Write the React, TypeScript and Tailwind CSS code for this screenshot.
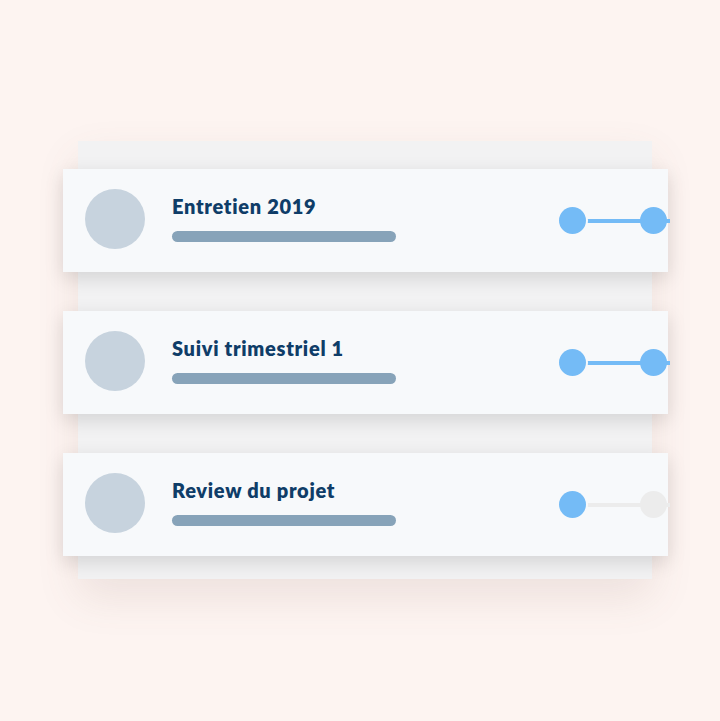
const items = [
  { title: "Entretien 2019", done: true },
  { title: "Suivi trimestriel 1", done: true },
  { title: "Review du projet", done: false },
];

const Steps = ({ done }: { done: boolean }) => (
  <div className="relative flex items-center w-[111px] h-[30px] -mr-[2px] shrink-0">
    <div
      className={`absolute left-[13px] right-0 top-1/2 -translate-y-1/2 h-[4px] ${
        done ? "bg-[#74bbf6]" : "bg-[#ececec]"
      }`}
    />
    <div className="relative w-[27px] h-[27px] rounded-full bg-[#74bbf6] ring-2 ring-[#f7f9fb]" />
    <div
      className={`relative ml-auto mr-[3px] w-[27px] h-[27px] rounded-full ${
        done ? "bg-[#74bbf6]" : "bg-[#ececec]"
      }`}
    />
  </div>
);

const App = () => {
  return (
    <div
      className="w-[720px] h-[721px] bg-[#fdf4f1] flex items-start pl-[78px] pt-[141px]"
      style={{ fontFamily: "Lato, 'Open Sans', sans-serif" }}
    >
      <div className="w-[574px] bg-[#f2f2f3] pt-[28px] pb-[23px] flex flex-col gap-[39px] shadow-[0_18px_40px_rgba(120,90,80,0.12)]">
        {items.map((item) => (
          <div
            key={item.title}
            className="w-[605px] ml-[-15px] h-[103px] bg-[#f7f9fb] flex items-center pl-[22px] shadow-[0_6px_18px_rgba(0,0,0,0.13)]"
          >
            <div className="w-[60px] h-[60px] rounded-full bg-[#c7d3de] shrink-0 mb-[4px]" />
            <div className="ml-[27px] flex flex-col pb-[5px]">
              <div className="text-[20px] font-extrabold text-[#0f3d68] leading-[24px] tracking-[0.7px]">
                {item.title}
              </div>
              <div className="mt-[13px] w-[224px] h-[11px] rounded-full bg-[#87a3b9]" />
            </div>
            <div className="ml-auto">
              <Steps done={item.done} />
            </div>
          </div>
        ))}
      </div>
    </div>
  );
};

export default App;
